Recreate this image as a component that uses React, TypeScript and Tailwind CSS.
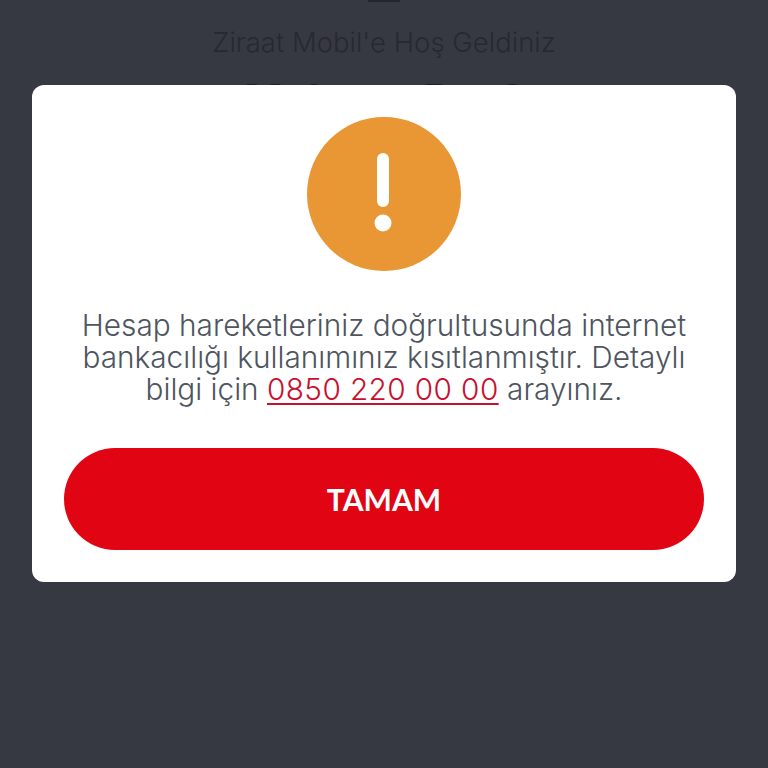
export default function App() {
  return (
    <div className="relative h-[768px] w-[768px] overflow-hidden bg-[#363942] font-['Inter',sans-serif]">
      {/* dimmed page behind the dialog */}
      <div className="flex flex-col items-center">
        <div className="h-[2px] w-[32px] bg-[#24262d]" />
        <p className="mt-[22px] text-[27.5px] font-light leading-[36px] text-[#272930]">Ziraat Mobil'e Hoş Geldiniz</p>
        <p className="mt-[16px] text-[42px] font-bold leading-[48px] text-[#1f2126]">Mehmet Bey?</p>
      </div>

      <div className="absolute inset-x-[32px] top-[85px] flex h-[497px] flex-col items-center rounded-[12px] bg-white px-[32px] pt-[32px]">
        <div className="flex h-[154px] w-[154px] items-center justify-center rounded-full bg-[#e99735]">
          <svg width="24" height="82" viewBox="0 0 24 82" fill="#fff">
            <rect x="5" y="0" width="12" height="54" rx="6" />
            <circle cx="11" cy="70" r="8.5" />
          </svg>
        </div>
        <p className="mt-[38px] w-full text-center text-[29.75px] font-light leading-[32px] text-[#4e5560]">
          Hesap hareketleriniz doğrultusunda internet
          <br />
          bankacılığı kullanımınız kısıtlanmıştır. Detaylı
          <br />
          bilgi için{' '}
          <a className="tracking-[0.4px] text-[#c8102e] underline decoration-[2px] underline-offset-[3px]">0850 220 00 00</a> arayınız.
        </p>
        <button className="mt-[43px] flex h-[102px] w-full items-center justify-center rounded-full bg-[#e10412] font-['Lato',sans-serif] text-[30px] font-bold text-white">
          TAMAM
        </button>
      </div>
    </div>
  );
}
